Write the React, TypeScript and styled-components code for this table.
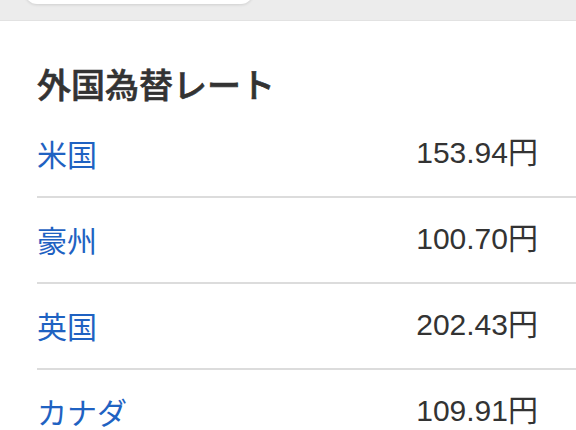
import React from "react";
import styled, { createGlobalStyle } from "styled-components";

const Global = createGlobalStyle`
  html, body { margin: 0; padding: 0; background: #ffffff; }
  body { font-family: "Liberation Sans", "Noto Sans CJK JP", sans-serif; }
`;

const Page = styled.div`
  width: 576px;
  height: 430px;
  overflow: hidden;
  background: #ffffff;
`;

const TopBand = styled.div`
  height: 20px;
  background: #ececec;
  border-bottom: 1px solid #e2e2e2;
  overflow: hidden;
  padding-left: 25px;
`;

const SearchBox = styled.div`
  width: 228px;
  height: 30px;
  margin-top: -26px;
  background: #ffffff;
  border-radius: 12px;
  box-shadow: 0 1px 3px rgba(0, 0, 0, 0.12);
`;

const Section = styled.section`
  padding-left: 37px;
`;

const Title = styled.h2`
  margin: 0 0 8px;
  padding-top: 43px;
  font-family: "Noto Sans CJK JP", sans-serif;
  font-size: 34px;
  line-height: 40px;
  font-weight: 500;
  color: #333333;
  -webkit-text-stroke: 0.6px #333333;
`;

const Row = styled.div<{ $last?: boolean }>`
  box-sizing: border-box;
  height: 86px;
  display: flex;
  align-items: center;
  justify-content: space-between;
  padding-right: 38px;
  border-bottom: 2px solid ${(p) => (p.$last ? "transparent" : "#dcdcdc")};
`;

const Name = styled.a`
  font-family: "Noto Sans CJK JP", sans-serif;
  font-size: 30px;
  line-height: 40px;
  color: #1f62c2;
  text-decoration: none;
  margin-top: -2px;
`;

const Rate = styled.span`
  font-family: "Liberation Sans", "Noto Sans CJK JP", sans-serif;
  font-size: 30px;
  line-height: 40px;
  color: #333333;
  margin-top: -2px;
`;

const rates = [
  { name: "米国", value: "153.94" },
  { name: "豪州", value: "100.70" },
  { name: "英国", value: "202.43" },
  { name: "カナダ", value: "109.91" },
];

export default function App() {
  return (
    <Page>
      <Global />
      <TopBand>
        <SearchBox />
      </TopBand>
      <Section>
        <Title>外国為替レート</Title>
        {rates.map((r, i) => (
          <Row key={r.name} $last={i === rates.length - 1}>
            <Name href="#">{r.name}</Name>
            <Rate>{r.value}円</Rate>
          </Row>
        ))}
      </Section>
    </Page>
  );
}
